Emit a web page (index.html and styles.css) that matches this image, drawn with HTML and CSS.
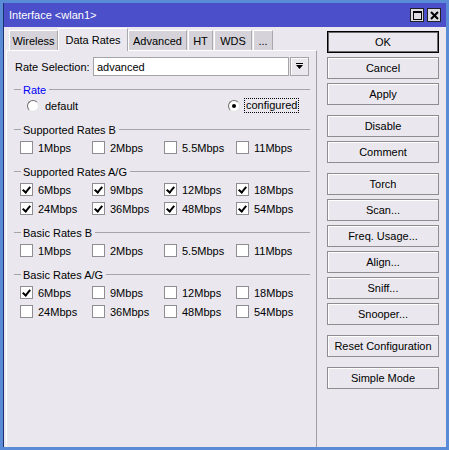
FILE: index.html
```html
<!DOCTYPE html>
<html>
<head>
<meta charset="utf-8">
<link rel="stylesheet" href="styles.css">
</head>
<body>
<div class="window">
  <div class="frame">
    <div class="titlebar">
      <span class="title">Interface &lt;wlan1&gt;</span>
      <div class="tb-btns">
        <span class="tb-btn"><svg width="9" height="9" viewBox="0 0 9 9"><rect x="0.5" y="0.5" width="8" height="8" fill="none" stroke="#000"/><rect x="0" y="0" width="9" height="2" fill="#000"/></svg></span>
        <span class="tb-btn"><svg width="9" height="9" viewBox="0 0 9 9"><path d="M1 1 L8 8 M8 1 L1 8" stroke="#000" stroke-width="2"/></svg></span>
      </div>
    </div>
    <div class="body">
      <div class="left">
        <div class="tabs">
          <div class="tab w-wireless">Wireless</div>
          <div class="tab active w-rates">Data Rates</div>
          <div class="tab w-adv">Advanced</div>
          <div class="tab w-ht">HT</div>
          <div class="tab w-wds">WDS</div>
          <div class="tab w-more">...</div>
        </div>
        <div class="panel">
          <div class="sel-row">
            <span class="sel-label">Rate Selection:</span>
            <div class="input">advanced</div>
            <div class="dd"><svg width="7" height="7" viewBox="0 0 7 7"><rect x="0" y="0" width="7" height="1" fill="#000"/><path d="M0 2 H7 L3.5 6 Z" fill="#000"/></svg></div>
          </div>

          <div class="group rate-group">
            <div class="gh blue"><span>Rate</span></div>
            <div class="radio-row">
              <div class="radio-item"><span class="radio"></span><span>default</span></div>
              <div class="radio-item"><span class="radio on"></span><span class="focus">configured</span></div>
            </div>
          </div>

          <div class="group g-first">
            <div class="gh"><span>Supported Rates B</span></div>
            <div class="rows">
              <div class="cb-row">
                <div class="cb-item"><span class="cb"></span><span>1Mbps</span></div>
                <div class="cb-item"><span class="cb"></span><span>2Mbps</span></div>
                <div class="cb-item"><span class="cb"></span><span>5.5Mbps</span></div>
                <div class="cb-item"><span class="cb"></span><span>11Mbps</span></div>
              </div>
            </div>
          </div>

          <div class="group">
            <div class="gh"><span>Supported Rates A/G</span></div>
            <div class="rows">
              <div class="cb-row">
                <div class="cb-item"><span class="cb on"></span><span>6Mbps</span></div>
                <div class="cb-item"><span class="cb on"></span><span>9Mbps</span></div>
                <div class="cb-item"><span class="cb on"></span><span>12Mbps</span></div>
                <div class="cb-item"><span class="cb on"></span><span>18Mbps</span></div>
              </div>
              <div class="cb-row">
                <div class="cb-item"><span class="cb on"></span><span>24Mbps</span></div>
                <div class="cb-item"><span class="cb on"></span><span>36Mbps</span></div>
                <div class="cb-item"><span class="cb on"></span><span>48Mbps</span></div>
                <div class="cb-item"><span class="cb on"></span><span>54Mbps</span></div>
              </div>
            </div>
          </div>

          <div class="group">
            <div class="gh"><span>Basic Rates B</span></div>
            <div class="rows">
              <div class="cb-row">
                <div class="cb-item"><span class="cb"></span><span>1Mbps</span></div>
                <div class="cb-item"><span class="cb"></span><span>2Mbps</span></div>
                <div class="cb-item"><span class="cb"></span><span>5.5Mbps</span></div>
                <div class="cb-item"><span class="cb"></span><span>11Mbps</span></div>
              </div>
            </div>
          </div>

          <div class="group">
            <div class="gh"><span>Basic Rates A/G</span></div>
            <div class="rows">
              <div class="cb-row">
                <div class="cb-item"><span class="cb on"></span><span>6Mbps</span></div>
                <div class="cb-item"><span class="cb"></span><span>9Mbps</span></div>
                <div class="cb-item"><span class="cb"></span><span>12Mbps</span></div>
                <div class="cb-item"><span class="cb"></span><span>18Mbps</span></div>
              </div>
              <div class="cb-row">
                <div class="cb-item"><span class="cb"></span><span>24Mbps</span></div>
                <div class="cb-item"><span class="cb"></span><span>36Mbps</span></div>
                <div class="cb-item"><span class="cb"></span><span>48Mbps</span></div>
                <div class="cb-item"><span class="cb"></span><span>54Mbps</span></div>
              </div>
            </div>
          </div>
        </div>
      </div>

      <div class="buttons">
        <div class="btn default">OK</div>
        <div class="btn">Cancel</div>
        <div class="btn">Apply</div>
        <div class="btn sep">Disable</div>
        <div class="btn">Comment</div>
        <div class="btn sep">Torch</div>
        <div class="btn">Scan...</div>
        <div class="btn">Freq. Usage...</div>
        <div class="btn">Align...</div>
        <div class="btn">Sniff...</div>
        <div class="btn">Snooper...</div>
        <div class="btn sep">Reset Configuration</div>
        <div class="btn sep">Simple Mode</div>
      </div>
    </div>
  </div>
</div>
</body>
</html>
```

FILE: styles.css
```css
* { box-sizing: border-box; }
html, body { margin: 0; padding: 0; }
body {
  font-family: "Liberation Sans", Arial, sans-serif;
  font-size: 11px;
  color: #000;
  background: #5a8bd6;
}
.window {
  width: 449px;
  height: 450px;
  padding: 3px;
  background: #5a8bd6;
}
.frame {
  height: 100%;
  display: flex;
  flex-direction: column;
  background: #eae8ee;
  border-left: 1px solid #1d2f6e;
}
.titlebar {
  height: 24px;
  flex: none;
  background: #4b4fc9;
  color: #fff;
  display: flex;
  align-items: center;
  padding: 0 5px;
}
.title { flex: 1; }
.tb-btns { display: flex; gap: 3px; }
.tb-btn {
  width: 14px;
  height: 14px;
  background: #dddce2;
  border: 1px solid #222;
  display: flex;
  align-items: center;
  justify-content: center;
}
.body {
  flex: 1;
  display: flex;
  padding: 1px 7px 0 2px;
  min-height: 0;
}
.left {
  width: 311px;
  display: flex;
  flex-direction: column;
}
.tabs {
  display: flex;
  height: 22px;
  padding-left: 3px;
  position: relative;
  z-index: 1;
}
.tab {
  height: 20px;
  margin-top: 2px;
  background: #d5d3d9;
  border-top: 1px solid #fff;
  border-left: 1px solid #fff;
  border-right: 1px solid #a9a9ad;
  display: flex;
  align-items: center;
  justify-content: center;
}
.tab.active {
  height: 23px;
  margin-top: 0;
  background: #eae8ee;
}
.w-wireless { width: 49px; }
.w-rates { width: 70px; }
.w-adv { width: 59px; margin-right: 1px; }
.w-ht { width: 25px; margin-right: 1px; }
.w-wds { width: 38px; margin-right: 1px; }
.w-more { width: 20px; }
.panel {
  flex: 1;
  border-top: 1px solid #fff;
  border-left: 1px solid #fff;
  border-right: 1px solid #a0a0a4;
  padding: 6px 6px 0 7px;
}
.sel-row {
  display: flex;
  height: 19px;
  margin-right: 1px;
}
.sel-label {
  width: 79px;
  padding-left: 1px;
  display: flex;
  align-items: center;
}
.input {
  flex: 1;
  background: #fff;
  border: 1px solid #a5a5a8;
  padding-left: 3px;
  display: flex;
  align-items: center;
}
.dd {
  width: 19px;
  margin-left: 1px;
  border: 1px solid #a5a5a8;
  box-shadow: inset 1px 1px 0 #fff;
  display: flex;
  align-items: center;
  justify-content: center;
}
.gh {
  display: flex;
  align-items: center;
  height: 15px;
}
.gh::before {
  content: "";
  width: 7px;
  height: 1px;
  background: #a5a5a8;
  margin-right: 2px;
}
.gh::after {
  content: "";
  flex: 1;
  height: 1px;
  background: #a5a5a8;
  margin-left: 3px;
}
.gh.blue { color: #0000ff; }
.rate-group { margin-top: 6px; }
.group { margin-top: 7px; }
.group.rate-group { margin-top: 6px; }
.group.g-first { margin-top: 8px; }
.radio-row {
  display: grid;
  grid-template-columns: 201px auto;
  height: 17px;
  padding-left: 13px;
  align-items: center;
}
.radio-item {
  display: flex;
  align-items: center;
  gap: 6px;
}
.radio {
  width: 12px;
  height: 12px;
  border-radius: 50%;
  background: #fff;
  border: 1px solid;
  border-color: #6f6f6f #e4e4e4 #e4e4e4 #6f6f6f;
  position: relative;
}
.radio.on::after {
  content: "";
  position: absolute;
  left: 3px;
  top: 3px;
  width: 4px;
  height: 4px;
  border-radius: 50%;
  background: #000;
}
.focus {
  margin-left: -2px;
  border: 1px dotted #000;
  padding: 0 1px;
  line-height: 13px;
}
.rows { margin-top: 1px; }
.cb-row {
  display: grid;
  grid-template-columns: repeat(4, 72px);
  height: 19px;
  padding-left: 6px;
  align-items: center;
}
.cb-item {
  display: flex;
  align-items: center;
  gap: 5px;
}
.cb {
  width: 13px;
  height: 13px;
  background: #fff;
  border: 1px solid #8e8e92;
  position: relative;
}
.cb.on::after {
  content: "";
  position: absolute;
  left: 3px;
  top: 1px;
  width: 3px;
  height: 6px;
  border-right: 2px solid #000;
  border-bottom: 2px solid #000;
  transform: rotate(40deg);
}
.buttons {
  width: 112px;
  margin-left: 10px;
  padding-top: 3px;
  display: flex;
  flex-direction: column;
  gap: 4px;
}
.btn {
  height: 22px;
  flex: none;
  border: 1px solid #8d8d90;
  box-shadow: inset 1px 1px 0 #fff;
  background: #eae8ee;
  display: flex;
  align-items: center;
  justify-content: center;
}
.btn.default {
  border-color: #000;
  box-shadow: inset 0 0 0 1px #6a6a6a;
}
.btn.sep { margin-top: 6px; }
```
